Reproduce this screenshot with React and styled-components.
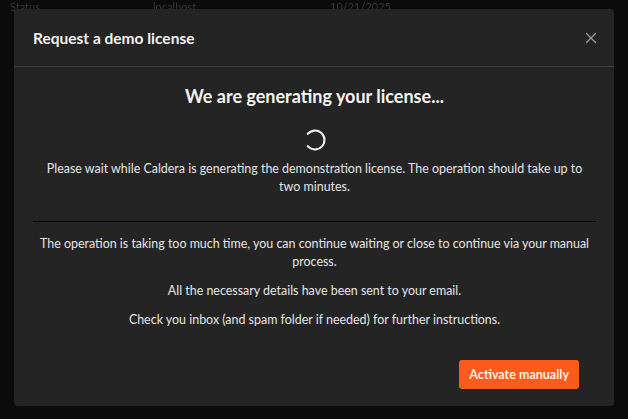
import React from 'react';
import styled, { createGlobalStyle } from 'styled-components';
import { X } from 'lucide-react';

const GlobalStyle = createGlobalStyle`
  html, body {
    margin: 0;
    padding: 0;
    background: #0b0b0b;
    font-family: Lato, "Liberation Sans", sans-serif;
  }
`;

const Page = styled.div`
  position: relative;
  width: 628px;
  height: 419px;
  overflow: hidden;
`;

const BackRow = styled.div`
  display: flex;
  align-items: flex-start;
  padding: 0 0 0 10px;
  color: #353535;
  font-size: 11px;
  line-height: 13px;
  filter: blur(0.5px);
`;

const BackCell = styled.span`
  width: ${(p) => p.$w}px;
`;

const Overlay = styled.div`
  position: absolute;
  inset: 0;
  display: flex;
  justify-content: center;
  align-items: flex-start;
  padding-top: 9px;
`;

const Modal = styled.div`
  width: 600px;
  height: 397px;
  background: #242424;
  border-radius: 4px;
  display: flex;
  flex-direction: column;
  box-sizing: border-box;
`;

const Header = styled.div`
  height: 58px;
  flex: none;
  display: flex;
  align-items: center;
  justify-content: space-between;
  padding: 0 12px 0 19px;
  border-bottom: 1px solid #3f3f3f;
  box-sizing: border-box;
`;

const Title = styled.h2`
  margin: 0;
  font-size: 15.5px;
  font-weight: 700;
  color: #f2f2f2;
`;

const CloseButton = styled.button`
  background: none;
  border: none;
  padding: 0;
  width: 22px;
  height: 22px;
  display: flex;
  align-items: center;
  justify-content: center;
  color: #9a9a9a;
  cursor: pointer;
`;

const Body = styled.div`
  flex: 1;
  display: flex;
  flex-direction: column;
  align-items: center;
  padding: 17px 18px 17px 19px;
  text-align: center;
`;

const Heading = styled.h3`
  margin: 0;
  font-size: 18px;
  line-height: 24px;
  font-weight: 700;
  color: #f5f5f5;
`;

const Spinner = styled.svg`
  margin-top: 20px;
  display: block;
`;

const Text = styled.p`
  margin: ${(p) => p.$top || 0}px 0 0;
  padding: 0 6px;
  font-size: 12.45px;
  line-height: 18px;
  color: #e4e4e4;
`;

const Divider = styled.hr`
  align-self: stretch;
  margin: 25px 0 0;
  border: none;
  border-top: 1px solid #050505;
`;

const Footer = styled.div`
  align-self: stretch;
  margin-top: auto;
  display: flex;
  justify-content: flex-end;
  padding-right: 17px;
`;

const PrimaryButton = styled.button`
  height: 29px;
  padding: 0 10px;
  border: none;
  border-radius: 3px;
  background: #fd5a1e;
  color: #fdeee2;
  font-family: inherit;
  font-size: 12.5px;
  font-weight: 700;
  cursor: pointer;
`;

export default function App() {
  return (
    <Page>
      <GlobalStyle />
      <BackRow>
        <BackCell $w={143}>Status</BackCell>
        <BackCell $w={177}>localhost</BackCell>
        <BackCell $w={100}>10/21/2025</BackCell>
      </BackRow>
      <Overlay>
        <Modal>
          <Header>
            <Title>Request a demo license</Title>
            <CloseButton aria-label="Close">
              <X size={18} strokeWidth={1.6} />
            </CloseButton>
          </Header>
          <Body>
            <Heading>We are generating your license...</Heading>
            <Spinner width="24" height="24" viewBox="0 0 24 24">
              <circle
                cx="12"
                cy="12"
                r="9.5"
                fill="none"
                stroke="#f0f0f0"
                strokeWidth="2.2"
                strokeLinecap="round"
                strokeDasharray="46 13.7"
                transform="rotate(-140 12 12)"
              />
            </Spinner>
            <Text $top={8}>
              Please wait while Caldera is generating the demonstration license. The operation should take up to
              two minutes.
            </Text>
            <Divider />
            <Text $top={13}>
              The operation is taking too much time, you can continue waiting or close to continue via your manual
              process.
            </Text>
            <Text $top={11}>All the necessary details have been sent to your email.</Text>
            <Text $top={11}>Check you inbox (and spam folder if needed) for further instructions.</Text>
            <Footer>
              <PrimaryButton>Activate manually</PrimaryButton>
            </Footer>
          </Body>
        </Modal>
      </Overlay>
    </Page>
  );
}
